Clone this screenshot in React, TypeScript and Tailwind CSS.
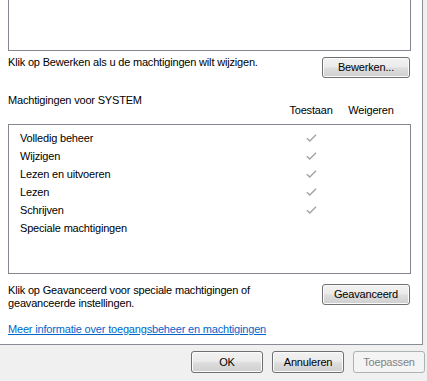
const PERMISSIONS = [
  { name: 'Volledig beheer', allow: true },
  { name: 'Wijzigen', allow: true },
  { name: 'Lezen en uitvoeren', allow: true },
  { name: 'Lezen', allow: true },
  { name: 'Schrijven', allow: true },
  { name: 'Speciale machtigingen', allow: false },
];

function Check() {
  return (
    <svg width="11" height="8" viewBox="0 0 11 8" className="block">
      <polyline points="0.8,4.2 3.8,7 10,0.8" fill="none" stroke="#a3a3a3" strokeWidth="1.4" />
    </svg>
  );
}

function WinButton({
  children,
  disabled = false,
  className = '',
}: {
  children: React.ReactNode;
  disabled?: boolean;
  className?: string;
}) {
  const look = disabled
    ? 'border-[#adb2b5] bg-[#f4f4f4] text-[#838383]'
    : 'border-[#707070] bg-[linear-gradient(#f2f2f2,#ebebeb_45%,#dddddd_55%,#cfcfcf)] text-black shadow-[inset_0_0_0_1px_#fbfbfb]';
  return (
    <button
      type="button"
      disabled={disabled}
      className={`flex items-center justify-center rounded-[3px] border text-[11px] leading-none ${look} ${className}`}
    >
      {children}
    </button>
  );
}

export default function App() {
  return (
    <div className="h-[381px] w-[427px] overflow-hidden bg-[#f0f0f0] font-['Liberation_Sans',Arial,sans-serif] text-[11px] leading-[13px] tracking-[-0.18px] text-black">
      <div className="flex h-[345px] w-[423px] flex-col border-r border-b border-[#898c95] bg-white">
        {/* group / user list, scrolled off the top */}
        <div className="ml-2 h-[51px] w-[403px] border-x border-b border-[#828790]" />

        <div className="ml-2 mt-[5px] flex w-[402px] items-start justify-between">
          <span>Klik op Bewerken als u de machtigingen wilt wijzigen.</span>
          <WinButton className="mt-[1px] h-[21px] w-[88px]">Bewerken...</WinButton>
        </div>

        <div className="ml-2 mt-[16px] flex w-[403px] items-start">
          <span className="flex-1">Machtigingen voor SYSTEM</span>
          <span className="mt-[10px] w-[60px] text-center">Toestaan</span>
          <span className="mt-[10px] w-[60px] text-center">Weigeren</span>
          <span className="w-[10px]" />
        </div>

        <div className="ml-2 mt-[7px] h-[150px] w-[403px] border border-[#828790] pt-[4px]">
          {PERMISSIONS.map((p) => (
            <div key={p.name} className="flex h-[18px] items-center leading-[18px]">
              <span className="flex-1 pl-[11px]">{p.name}</span>
              <span className="flex w-[60px] justify-center">{p.allow && <Check />}</span>
              <span className="w-[60px]" />
              <span className="w-[9px]" />
            </div>
          ))}
        </div>

        <div className="ml-2 mt-[10px] flex w-[402px] items-start justify-between">
          <span>
            Klik op Geavanceerd voor speciale machtigingen of
            <br />
            geavanceerde instellingen.
          </span>
          <WinButton className="h-[21px] w-[88px]">Geavanceerd</WinButton>
        </div>

        <a href="#" className="ml-2 mt-[13px] self-start text-[#0066cc] underline">
          Meer informatie over toegangsbeheer en machtigingen
        </a>
      </div>

      <div className="ml-[191px] mt-[6px] flex gap-[9px]">
        <WinButton className="h-[22px] w-[72px]">OK</WinButton>
        <WinButton className="h-[22px] w-[72px]">Annuleren</WinButton>
        <WinButton disabled className="h-[22px] w-[72px]">
          Toepassen
        </WinButton>
      </div>
    </div>
  );
}
